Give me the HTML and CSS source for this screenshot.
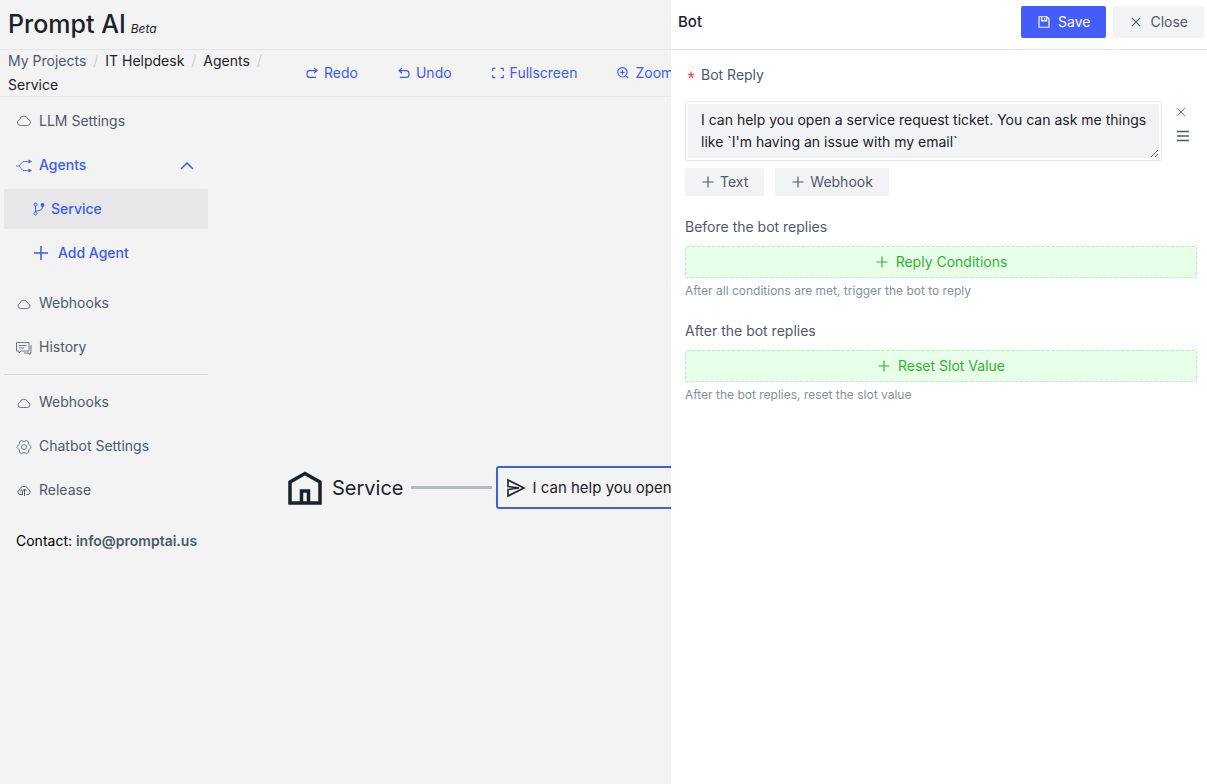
FILE: index.html
```html
<!DOCTYPE html>
<html lang="en">
<head>
<meta charset="utf-8">
<meta name="viewport" content="width=device-width, initial-scale=1">
<title>Prompt AI</title>
<link rel="stylesheet" href="styles.css">
</head>
<body>
<div class="app">
  <header class="header">
    <h1 class="brand">Prompt AI</h1>
    <em class="brand-tag">Beta</em>
  </header>
  <div class="subheader">
    <nav class="breadcrumb" aria-label="Breadcrumb">
      <a class="crumb crumb-root" href="#">My Projects</a><span class="slash">/</span>
      <a class="crumb" href="#">IT Helpdesk</a><span class="slash">/</span>
      <a class="crumb" href="#">Agents</a><span class="slash">/</span>
      <a class="crumb crumb-current" href="#">Service</a>
    </nav>
    <div class="toolbar">
      <button class="tool" type="button"><svg class="icon-14" viewBox="0 0 48 48"><path d="M31 7l10 9-10 8M40 16H16a9 9 0 0 0-9 9v5a9 9 0 0 0 9 9h22"/></svg>Redo</button>
      <button class="tool" type="button"><svg class="icon-14" viewBox="0 0 48 48"><path d="M17 7L7 16l10 8M8 16h24a9 9 0 0 1 9 9v5a9 9 0 0 1-9 9H10"/></svg>Undo</button>
      <button class="tool" type="button"><svg class="icon-14" viewBox="0 0 48 48"><path d="M42 17V9a1 1 0 0 0-1-1h-8M6 17V9a1 1 0 0 1 1-1h8M42 31v8a1 1 0 0 1-1 1h-8M6 31v8a1 1 0 0 0 1 1h8"/></svg>Fullscreen</button>
      <button class="tool" type="button"><svg class="icon-14" viewBox="0 0 48 48"><path d="M33 33a16 16 0 1 0-22 0 16 16 0 0 0 22 0zM33 33l9 9M22 14v16M14 22h16"/></svg>Zoom</button>
    </div>
  </div>
  <div class="body">
    <aside class="sidebar">
      <nav class="menu" aria-label="Main">
        <a class="item" href="#"><svg class="icon-16" viewBox="0 0 16 16"><path class="thin" d="M4.500 12.500a3 3 0 0 1-.8-5.900 4.200 4.200 0 0 1 8.200-.4 3.200 3.200 0 0 1-.4 6.300z"/></svg>LLM Settings</a>
        <a class="item item-open" href="#"><svg class="icon-16 drop" viewBox="0 0 16 16"><path class="thin" d="M0 8h3l4-4.500h7M3 8l4 4.500h7"/><path class="solid" d="M12.500 1.500L16 3.500l-3.500 2zM12.500 10.500l3.500 2-3.500 2z"/></svg>Agents<svg class="chevron" viewBox="0 0 14 14"><path d="M1 10l6-6 6 6"/></svg></a>
        <a class="item item-child item-active" href="#"><svg class="icon-12" viewBox="0 0 12 14"><circle cx="2.500" cy="2.500" r="1.500"/><circle cx="2.500" cy="11.500" r="1.500"/><path d="M2.500 4v6M2.500 9c3 0 7-.5 7-4V4"/><circle class="solid" cx="9.500" cy="3" r="1.900"/></svg>Service</a>
        <a class="item item-child item-add" href="#"><svg class="icon-16" viewBox="0 0 16 16"><path d="M8 1v14M1 8h14" stroke-width="1.500"/></svg>Add Agent</a>
        <a class="item item-gap" href="#"><svg class="icon-16 drop" viewBox="0 0 16 16"><path class="thin" d="M4.500 12.500a2.600 2.600 0 0 1-.6-5.100 4 4 0 0 1 7.800-.2 2.700 2.700 0 0 1 0 5.300z"/></svg>Webhooks</a>
        <a class="item" href="#"><svg class="icon-16 drop" viewBox="0 0 16 16"><path class="thin" d="M.5 2.500h12.500v8.500H5l-2 2v-2H.5zM3 5.500h7.500M3 8h5M15 5v8h-1v1.500L12 13H8"/></svg>History</a>
        <hr class="divider">
        <a class="item" href="#"><svg class="icon-16 drop" viewBox="0 0 16 16"><path class="thin" d="M4.500 12.500a2.600 2.600 0 0 1-.6-5.100 4 4 0 0 1 7.800-.2 2.700 2.700 0 0 1 0 5.300z"/></svg>Webhooks</a>
        <a class="item" href="#"><svg class="icon-16 drop" viewBox="0 0 16 16"><path class="thin" d="M5.500 1.500l2.500 1 2.500-1 2 1.200.2 2.700L15 7.500v1L12.700 10.800l-.2 2.500-2 1.200-2.500-1-2.500 1-2-1.200-.2-2.500L1 8.500v-1l2.300-2.100.2-2.700z"/><circle class="thin" cx="8" cy="8" r="2.500"/></svg>Chatbot Settings</a>
        <a class="item" href="#"><svg class="icon-16 drop" viewBox="0 0 16 16"><path d="M6 11.500H4a2.500 2.500 0 0 1-.2-4.900C4.200 4.500 6 3.300 8 3.300s3.800 1.200 4.200 3.300a2.500 2.500 0 0 1-.2 4.900h-1.500M4.500 8.500c0-1 .6-1.600 1.500-1.800M8.500 13V6M6.500 8L8.500 6l2 2M6.500 8v4"/></svg>Release</a>
      </nav>
      <p class="contact">Contact: <a class="contact-link" href="mailto:info@promptai.us">info@promptai.us</a></p>
    </aside>
    <main class="canvas">
      <div class="flow">
        <svg class="home" viewBox="0 0 34 34"><path d="M2 11L17 2.500l15 8.500V32H2z"/><path d="M13.500 32V20h7v12"/></svg>
        <span class="flow-title">Service</span>
        <span class="edge"></span>
        <div class="node"><svg class="send" viewBox="0 0 20 20"><path d="M2 2l16 8-16 8V11.500L13 10 2 8.500z"/></svg>I can help you open</div>
      </div>
    </main>
  </div>
</div>

<section class="drawer" aria-label="Bot">
  <header class="drawer-header">
    <h2 class="drawer-title">Bot</h2>
    <button class="btn btn-primary" type="button"><svg class="icon-14" viewBox="0 0 48 48"><path d="M7 6h27l7 7v29H7zM16 6v14h17V6M26 10v6"/></svg>Save</button>
    <button class="btn" type="button"><svg class="icon-14" viewBox="0 0 48 48"><path d="M10 10l28 28M38 10L10 38"/></svg>Close</button>
  </header>
  <form class="form">
    <label class="label label-required" for="reply"><svg class="star" viewBox="0 0 8 8"><path d="M4 .5v3.500M4 4L.8 3M4 4l3.200-1M4 4L2 7M4 4l2 3"/></svg>Bot Reply</label>
    <div class="reply">
      <div class="reply-box"><textarea class="reply-text" id="reply" rows="2">I can help you open a service request ticket. You can ask me things like `I'm having an issue with my email`</textarea></div>
      <div class="reply-tools">
        <button class="icon-btn icon-danger" type="button" aria-label="Delete"><svg class="icon-12" viewBox="0 0 48 48"><path d="M9 9l30 30M39 9L9 39"/></svg></button>
        <button class="icon-btn" type="button" aria-label="Move"><svg class="icon-16" viewBox="0 0 16 16"><path d="M2 3.500h12M2 8h12M2 12.500h12" stroke-width="1.300"/></svg></button>
      </div>
    </div>
    <div class="add-row">
      <button class="btn btn-small" type="button"><svg class="icon-14" viewBox="0 0 48 48"><path d="M5 24h38M24 5v38"/></svg>Text</button>
      <button class="btn btn-small" type="button"><svg class="icon-14" viewBox="0 0 48 48"><path d="M5 24h38M24 5v38"/></svg>Webhook</button>
    </div>
    <div class="field">
      <span class="label">Before the bot replies</span>
      <button class="btn btn-dashed" type="button"><svg class="icon-14" viewBox="0 0 48 48"><path d="M5 24h38M24 5v38"/></svg>Reply Conditions</button>
      <p class="hint">After all conditions are met, trigger the bot to reply</p>
    </div>
    <div class="field">
      <span class="label">After the bot replies</span>
      <button class="btn btn-dashed" type="button"><svg class="icon-14" viewBox="0 0 48 48"><path d="M5 24h38M24 5v38"/></svg>Reset Slot Value</button>
      <p class="hint">After the bot replies, reset the slot value</p>
    </div>
  </form>
</section>
</body>
</html>
```
FILE: styles.css
```css
* { box-sizing: border-box; }

body {
  margin: 0;
  background: #f3f3f3;
  color: #1d2129;
  font: 14px/22px Inter, sans-serif;
  overflow: hidden;
}

h1, h2, p { margin: 0; }
a { color: inherit; text-decoration: none; }
button { font: inherit; cursor: pointer; }

svg {
  flex: none;
  fill: none;
  stroke: currentColor;
}
svg[viewBox="0 0 48 48"] { stroke-width: 4; }
.icon-12 { width: 12px; height: 14px; }
.icon-14 { width: 14px; height: 14px; }
.icon-16 { width: 16px; height: 16px; }
.thin { stroke-width: 0.8; }
.solid { fill: currentColor; stroke: none; }

.app {
  display: flex;
  flex-direction: column;
  min-height: 100vh;
}

.header {
  display: flex;
  align-items: baseline;
  gap: 5px;
  height: 50px;
  padding: 8px;
  border-bottom: 1px solid #e5e6eb;
}
.brand { font-size: 25px; line-height: 32px; font-weight: 500; }
.brand-tag { font-size: 12px; }

.subheader {
  display: flex;
  align-items: center;
  height: 47px;
  border-bottom: 1px solid #e5e6eb;
}
.breadcrumb {
  flex: none;
  width: 280px;
  padding-left: 8px;
  line-height: 24px;
}
.crumb-root { color: #4e5969; }
.crumb-current { display: block; }
.slash { padding: 0 3px 0 7px; color: #c9cdd4; }

.toolbar { display: flex; gap: 39px; padding-left: 25px; }
.tool {
  display: flex;
  align-items: center;
  gap: 5px;
  padding: 0;
  border: 0;
  background: none;
  color: #3b5cf0;
}

.body { display: flex; flex: 1; }
.sidebar { flex: none; width: 212px; padding: 4px; }
.menu { display: flex; flex-direction: column; gap: 4px; color: #4e5969; }
.item {
  display: flex;
  align-items: center;
  gap: 7px;
  height: 40px;
  padding: 0 12px;
  border-radius: 2px;
}
.item-open, .item-child { color: #3b5cf0; font-weight: 500; }
.item-child { padding-left: 29px; gap: 6px; }
.item-add { gap: 9px; }
.item-active { background: #e7e7e9; }
.item-gap { margin-top: 6px; }
.drop { margin-top: 2px; }
.chevron { width: 14px; height: 14px; margin: 2px 2px 0 auto; stroke-width: 1.5; }
.divider {
  width: 100%;
  margin: 3px 0;
  border: 0;
  border-top: 1px solid #d6d7e0;
}
.contact { padding: 20px 0 20px 12px; color: #000; white-space: nowrap; }
.contact-link { color: #4e5969; font-weight: 600; }

.canvas { flex: 1; min-width: 0; padding: 369px 0 0 76px; overflow: hidden; }
.flow { display: flex; align-items: center; white-space: nowrap; }
.home { width: 34px; height: 34px; stroke-width: 3.5; }
.flow-title { padding: 0 7px 0 10px; font-size: 20px; line-height: 28px; }
.edge { flex: none; width: 81px; height: 3px; margin-right: 4px; background: #b4b8bf; }
.node {
  display: flex;
  flex: none;
  align-items: center;
  gap: 7px;
  width: 240px;
  height: 43px;
  padding: 0 8px;
  border: 2px solid #3963e0;
  border-radius: 3px;
  font-size: 15px;
}
.send { width: 20px; height: 20px; stroke-width: 1.6; }

.drawer {
  position: fixed;
  inset: 0 0 0 auto;
  width: 536px;
  background: #fff;
}
.drawer-header {
  display: flex;
  align-items: center;
  gap: 7px;
  height: 50px;
  padding: 0 3px 6px 7px;
  border-bottom: 1px solid #e5e6eb;
}
.drawer-title { flex: 1; font-size: 15px; font-weight: 500; }

.btn {
  display: flex;
  align-items: center;
  justify-content: center;
  gap: 7px;
  height: 32px;
  padding: 0 15px;
  border: 1px solid transparent;
  border-radius: 2px;
  background: #f2f3f5;
  color: #4e5969;
}
.btn-primary { background: #445dff; color: #fff; }
.btn-small { height: 28px; gap: 5px; }
.btn-dashed {
  width: 100%;
  border: 1px dashed #aff0b5;
  background: #e8ffea;
  color: #34b22e;
}

.form { padding: 14px 10px 14px 14px; }
.label { display: block; color: #4e5969; }
.label-required { display: flex; align-items: center; gap: 6px; padding-left: 2px; }
.star { width: 8px; height: 8px; color: #f53f3f; stroke-width: 1.2; }

.reply { display: flex; gap: 11px; margin-top: 15px; }
.reply-box { flex: 1; padding: 2px; border: 1px solid #e5e6eb; border-radius: 2px; }
.reply-text {
  display: block;
  width: 100%;
  height: 54px;
  padding: 5px 4px 5px 13px;
  border: 0;
  border-radius: 2px;
  background: #f2f3f5;
  color: #1d2129;
  font: inherit;
  resize: vertical;
  overflow: hidden;
}
.reply-tools { display: flex; flex-direction: column; gap: 8px; width: 24px; padding-top: 3px; }
.icon-btn {
  display: flex;
  align-items: center;
  height: 16px;
  padding: 0 2px;
  border: 0;
  background: none;
  color: #4e5969;
}
.icon-danger { color: #f53f3f; }

.add-row { display: flex; gap: 11px; margin: 7px 0 20px; }
.field { margin-top: 18px; }
.field .label { margin-bottom: 8px; }
.hint { margin-top: 2px; color: #86909c; font-size: 12px; }
```
